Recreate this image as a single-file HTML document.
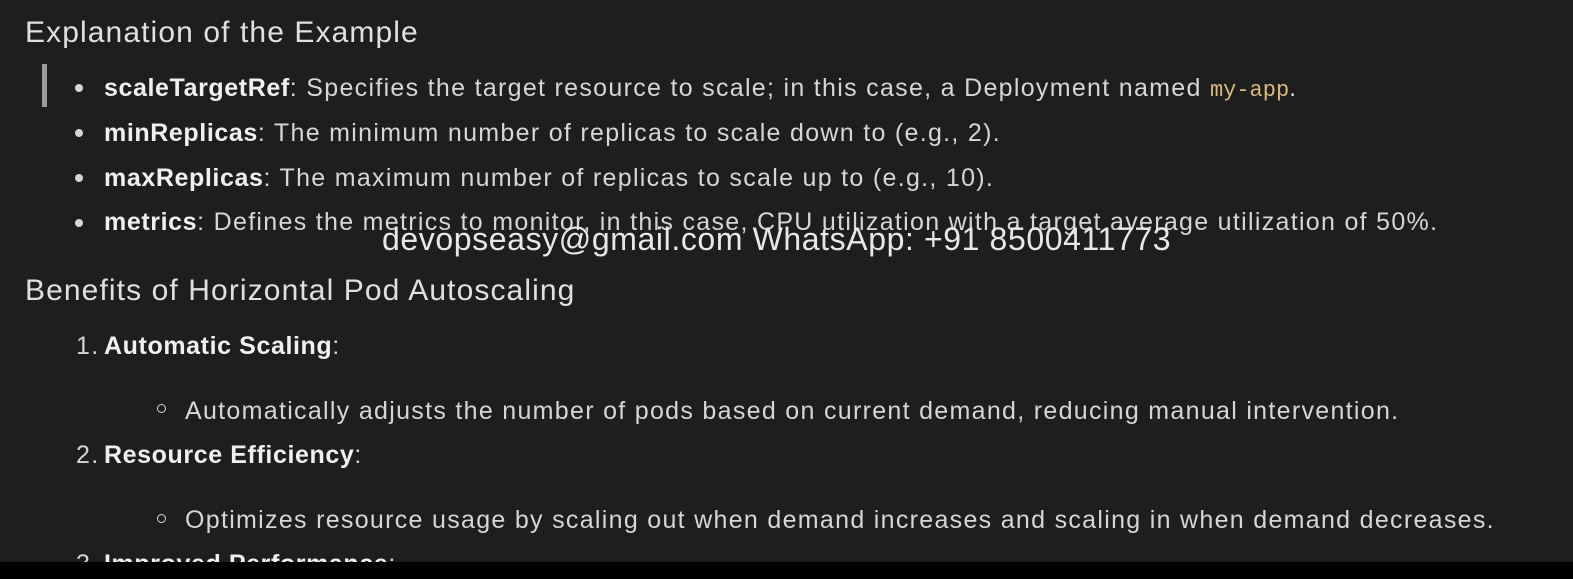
<!DOCTYPE html>
<html><head><meta charset="utf-8"><style>
body{margin:0;width:1573px;height:579px;background:#1e1e1e;overflow:hidden;position:relative;font-family:"Liberation Sans",sans-serif;color:#d6d6d6}
.t{position:absolute;white-space:nowrap;font-size:25px;line-height:30px;letter-spacing:1.3px}
.h{position:absolute;white-space:nowrap;font-size:30px;line-height:34px;color:#e0e0e0;letter-spacing:1.1px}
b{color:#f0f0f0;letter-spacing:0.6px}
.dot{position:absolute;width:8px;height:8px;border-radius:50%;background:#d6d6d6}
.circ{position:absolute;width:7px;height:7px;border-radius:50%;border:1.5px solid #d6d6d6}
code{font-family:"Liberation Mono",monospace;color:#d7ba7d;font-size:22px;letter-spacing:0}
</style></head><body>
<div class="h" style="left:25px;top:16px">Explanation of the Example</div>
<div style="position:absolute;left:42px;top:64px;width:5px;height:43px;background:#9a9a9a"></div>
<div class="dot" style="left:75px;top:84px"></div>
<div class="t" style="left:104px;top:73px"><b>scaleTargetRef</b>: Specifies the target resource to scale; in this case, a Deployment named <code>my-app</code>.</div>
<div class="dot" style="left:75px;top:129px"></div>
<div class="t" style="left:104px;top:118px"><b>minReplicas</b>: The minimum number of replicas to scale down to (e.g., 2).</div>
<div class="dot" style="left:75px;top:174px"></div>
<div class="t" style="left:104px;top:163px"><b>maxReplicas</b>: The maximum number of replicas to scale up to (e.g., 10).</div>
<div class="dot" style="left:75px;top:219px"></div>
<div class="t" style="left:104px;top:207px"><b>metrics</b>: Defines the metrics to monitor, in this case, CPU utilization with a target average utilization of 50%.</div>
<div style="position:absolute;left:382px;top:221px;font-size:32px;line-height:36px;color:#e8e8e8;white-space:nowrap;letter-spacing:0.6px">devopseasy@gmail.com WhatsApp: +91 8500411773</div>
<div class="h" style="left:25px;top:274px">Benefits of Horizontal Pod Autoscaling</div>
<div class="t" style="left:76px;top:331px">1.</div><div class="t" style="left:104px;top:331px"><b>Automatic Scaling</b>:</div>
<div class="circ" style="left:157px;top:404px"></div>
<div class="t" style="left:185px;top:396px">Automatically adjusts the number of pods based on current demand, reducing manual intervention.</div>
<div class="t" style="left:76px;top:440px">2.</div><div class="t" style="left:104px;top:440px"><b>Resource Efficiency</b>:</div>
<div class="circ" style="left:157px;top:514px"></div>
<div class="t" style="left:185px;top:505px">Optimizes resource usage by scaling out when demand increases and scaling in when demand decreases.</div>
<div class="t" style="left:76px;top:549px">3.</div><div class="t" style="left:104px;top:549px"><b>Improved Performance</b>:</div>
<div style="position:absolute;left:0;top:562px;width:1573px;height:17px;background:#000"></div>
</body></html>
